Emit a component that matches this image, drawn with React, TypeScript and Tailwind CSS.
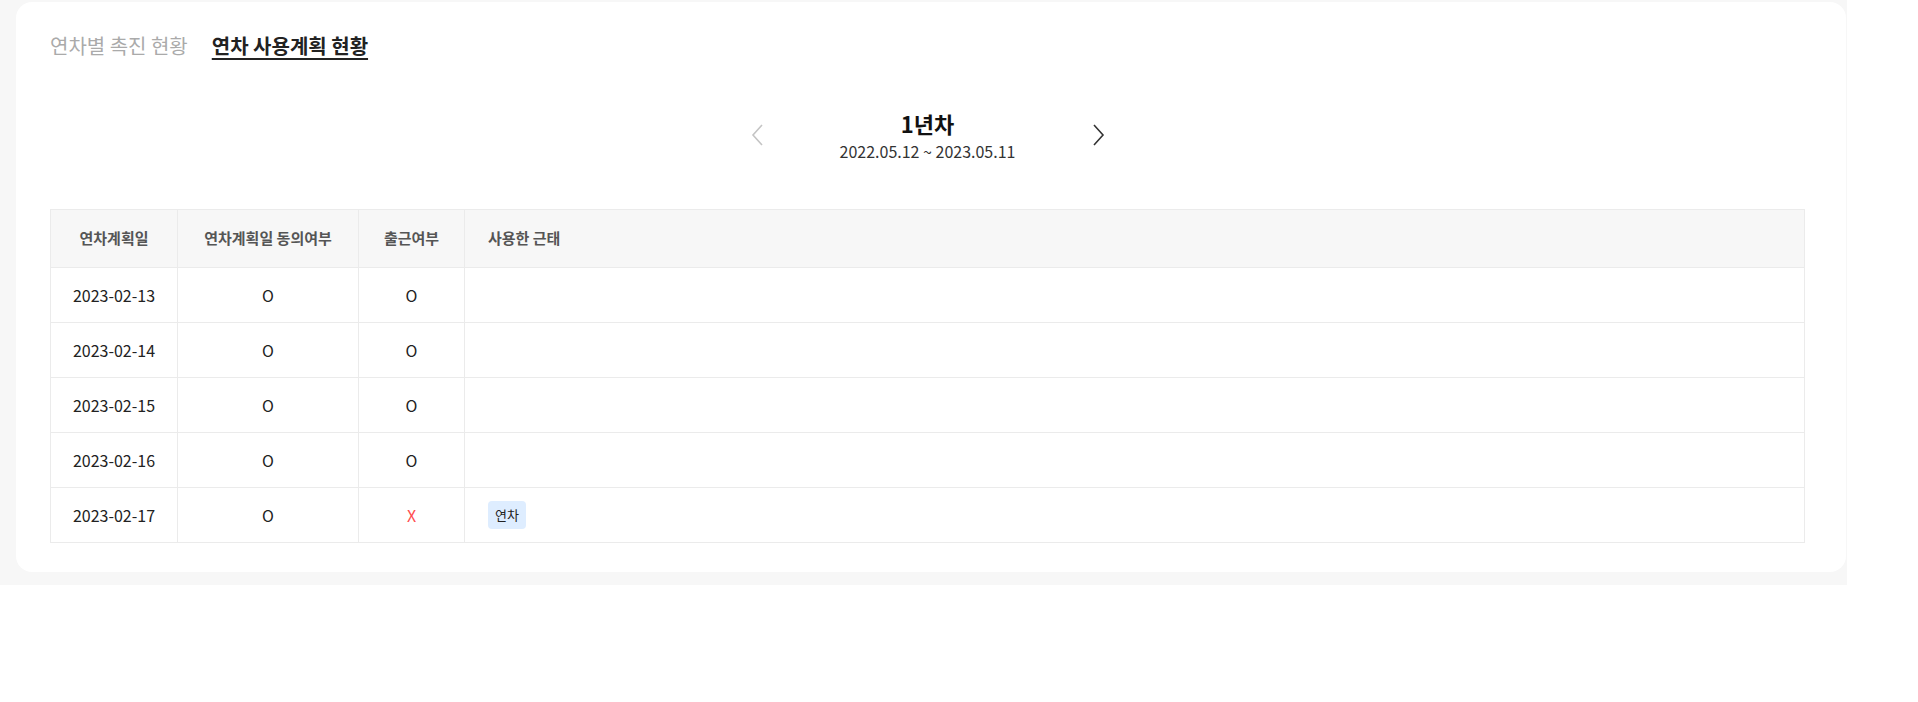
import React from "react";

const rows = [
  { date: "2023-02-13", agree: "O", attend: "O", used: "" },
  { date: "2023-02-14", agree: "O", attend: "O", used: "" },
  { date: "2023-02-15", agree: "O", attend: "O", used: "" },
  { date: "2023-02-16", agree: "O", attend: "O", used: "" },
  { date: "2023-02-17", agree: "O", attend: "X", used: "연차" },
];

const Chevron = ({ dir, color }: { dir: "left" | "right"; color: string }) => (
  <svg width="14" height="22" viewBox="0 0 14 22" fill="none">
    {dir === "left" ? (
      <polyline points="11,1 2,11 11,21" stroke={color} strokeWidth="1.6" />
    ) : (
      <polyline points="3,1 12,11 3,21" stroke={color} strokeWidth="1.6" />
    )}
  </svg>
);

const App = () => {
  return (
    <div
      className="w-[1918px] h-[702px] bg-white"
      style={{ fontFamily: '"Noto Sans CJK KR", "Noto Sans", sans-serif' }}
    >
      <div className="w-[1847px] bg-[#f7f7f7] pl-4 pt-[2px] pr-[1px] pb-[13px]">
        <div className="bg-white rounded-[16px] pl-[34px] pr-[41px] pt-[30px] pb-[29px]">
          {/* Tabs */}
          <div className="flex items-center gap-[24px] h-[28px] text-[20px] leading-[28px]">
            <span className="text-[#aaaaaa]">연차별 촉진 현황</span>
            <span className="text-[#222222] font-bold underline underline-offset-[4px] decoration-[2px]">
              연차 사용계획 현황
            </span>
          </div>

          {/* Year navigation */}
          <div className="flex items-center justify-center mt-[48px]">
            <button className="mr-[63px] mt-[-1px]">
              <Chevron dir="left" color="#c4c4c4" />
            </button>
            <div className="flex flex-col items-center w-[200px]">
              <div className="text-[22px] leading-[30px] font-bold text-[#111111]">1년차</div>
              <div className="text-[16px] leading-[22px] mt-[2px] text-[#333333]">
                2022.05.12 ~ 2023.05.11
              </div>
            </div>
            <button className="ml-[63px] mt-[-1px]">
              <Chevron dir="right" color="#333333" />
            </button>
          </div>

          {/* Table */}
          <table className="w-full table-fixed border-collapse mt-[47px]">
            <colgroup>
              <col className="w-[127px]" />
              <col className="w-[181px]" />
              <col className="w-[106px]" />
              <col />
            </colgroup>
            <thead>
              <tr className="h-[58px] bg-[#f7f7f7] text-[15px]">
                <th className="border border-[#ebebeb] font-bold text-[#555555] text-center">연차계획일</th>
                <th className="border border-[#ebebeb] font-bold text-[#555555] text-center">연차계획일 동의여부</th>
                <th className="border border-[#ebebeb] font-bold text-[#555555] text-center">출근여부</th>
                <th className="border border-[#ebebeb] font-bold text-[#555555] text-left pl-[23px]">사용한 근태</th>
              </tr>
            </thead>
            <tbody className="text-[16px]">
              {rows.map((r) => (
                <tr key={r.date} className="h-[55px]">
                  <td className="border border-[#ebebeb] text-center text-[#222222]">{r.date}</td>
                  <td className="border border-[#ebebeb] text-center text-[#222222]">{r.agree}</td>
                  <td
                    className={
                      r.attend === "X"
                        ? "border border-[#ebebeb] text-center text-[#ff4d4f]"
                        : "border border-[#ebebeb] text-center text-[#222222]"
                    }
                  >
                    {r.attend}
                  </td>
                  <td className="border border-[#ebebeb] pl-[23px]">
                    {r.used && (
                      <span className="inline-flex items-center h-[28px] px-[7px] rounded-[4px] bg-[#deedff] text-[13px] text-[#222222]">
                        {r.used}
                      </span>
                    )}
                  </td>
                </tr>
              ))}
            </tbody>
          </table>
        </div>
      </div>
    </div>
  );
};

export default App;
